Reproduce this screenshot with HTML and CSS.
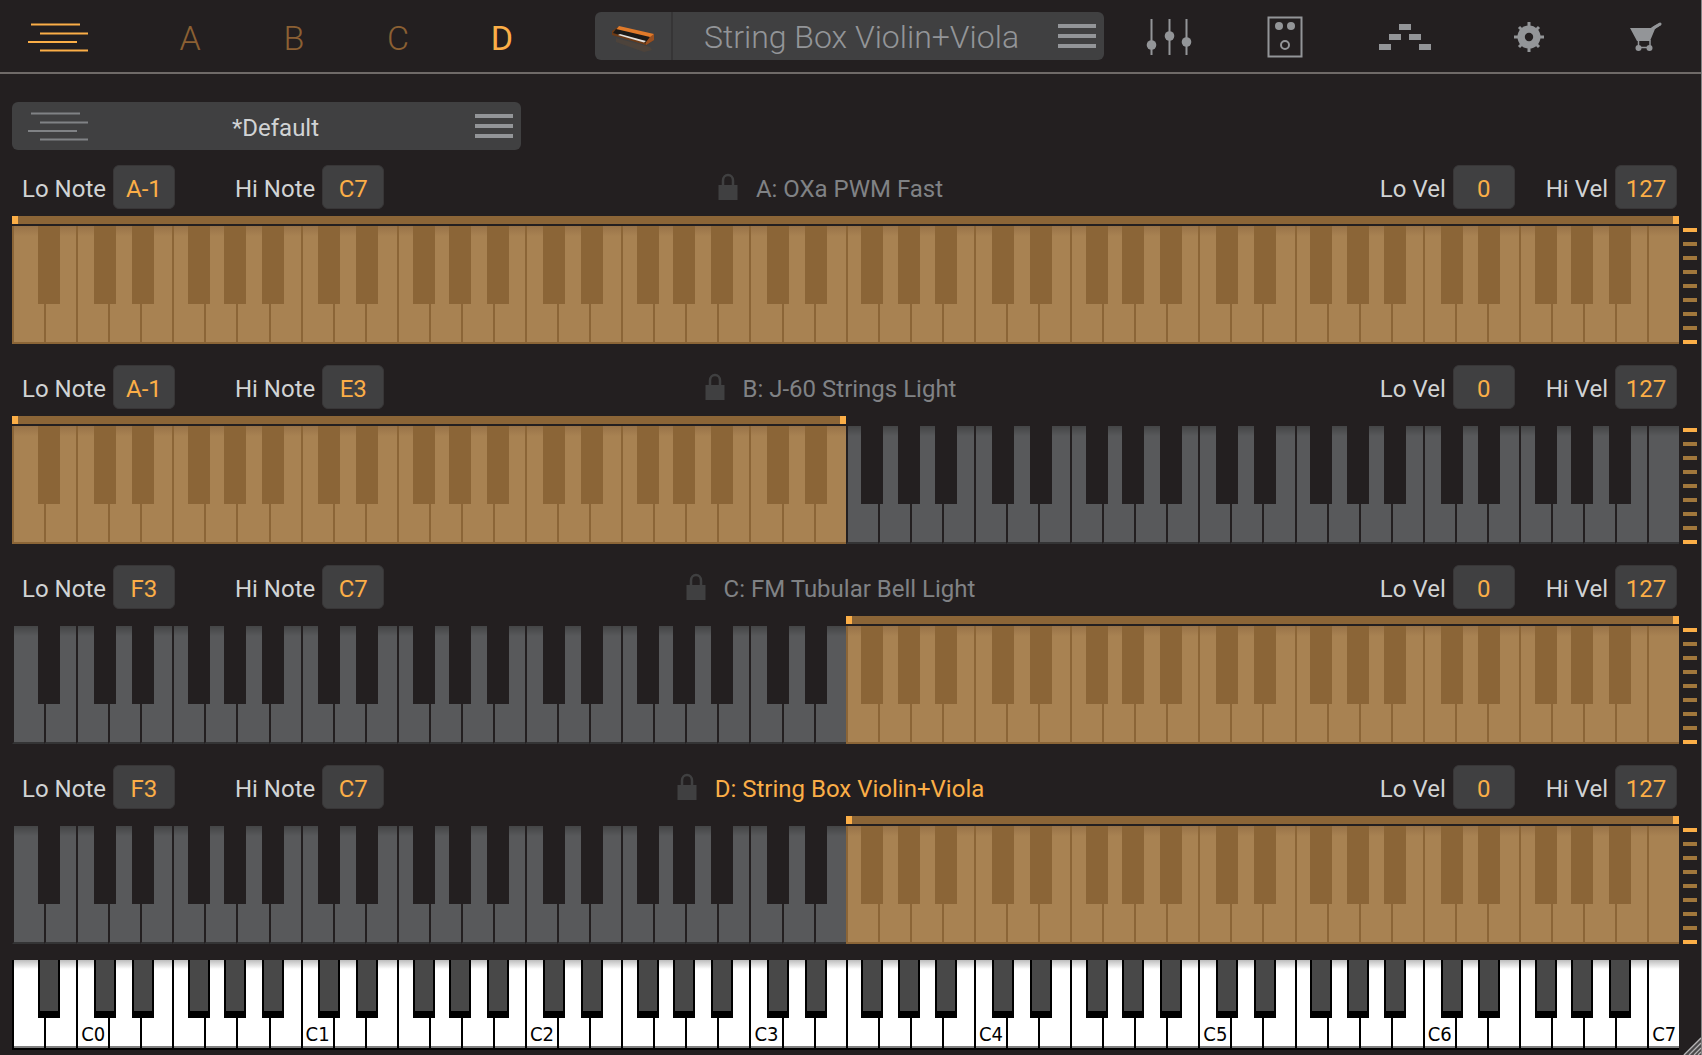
FILE: index.html
```html
<!DOCTYPE html>
<html lang="en">
<head>
<meta charset="utf-8">
<title>Keyboard Splits</title>
<link rel="stylesheet" href="styles.css">
</head>
<body>
<div class="app">
  <header class="topbar">
    <nav class="tabs" aria-label="Layers">
      <button class="tab" aria-label="Layers view"><svg width="60" height="30" viewBox="0 0 60 30"><path d="M3 2.5h49M12 11.5h48M0 20h49M12 28.500h48" stroke="currentColor" stroke-width="2" fill="none"/></svg></button>
      <button class="tab dim">A</button>
      <button class="tab dim">B</button>
      <button class="tab dim">C</button>
      <button class="tab">D</button>
    </nav>
    <div class="preset">
      <button class="thumb" aria-label="Instrument">
        <svg width="46" height="30" viewBox="0 0 46 30">
          <path d="M6 15L40 24L42 27L34 29L6 19Z" fill="#5a4636" opacity=".5"/>
          <path d="M2 8L8 4L44 12L44 17L36 22L2 12Z" fill="#6e3b16"/>
          <path d="M9 3L44 11L41 15L6 7Z" fill="#e07a2a"/>
          <path d="M6 6L40 14L37 20L3 10Z" fill="#1c1a18"/>
          <path d="M10 11L36 18L34 19.500L8 12Z" fill="#e6e2dd"/>
          <path d="M40 14L44 11L44 17L36 22L36 19Z" fill="#9a5020"/>
        </svg>
      </button>
      <button class="preset-name">String Box Violin+Viola</button>
      <button class="menu" aria-label="Preset menu"><span class="burger"></span></button>
    </div>
    <div class="tools">
      <button class="tool" aria-label="Mixer"><svg width="46" height="40" viewBox="0 0 46 40"><path d="M5.500 2v36M23.500 2v36M40.500 2v36" stroke="currentColor" stroke-width="2"/><circle cx="5.500" cy="28" r="4.800" fill="currentColor"/><circle cx="23.500" cy="19" r="4.800" fill="currentColor"/><circle cx="40.500" cy="25" r="4.800" fill="currentColor"/></svg></button>
      <button class="tool" aria-label="Effects"><svg width="36" height="42" viewBox="0 0 36 42"><rect x="1.500" y="1.500" width="33" height="39" fill="none" stroke="currentColor" stroke-width="2"/><circle cx="12" cy="10" r="4" fill="currentColor"/><circle cx="24" cy="10" r="4" fill="currentColor"/><circle cx="18" cy="29" r="4" fill="none" stroke="currentColor" stroke-width="2"/></svg></button>
      <button class="tool" aria-label="Arpeggiator"><svg width="54" height="28" viewBox="0 0 54 28"><path d="M21 1h12v6H21zM11 11h12v6H11zM31 11h12v6H31zM1 21h12v6H1zM41 21h12v6H41z" fill="currentColor"/></svg></button>
      <button class="tool" aria-label="Settings"><svg width="32" height="32" viewBox="0 0 32 32"><path d="M16 1v30M1 16h30M6 6l20 20M26 6L6 26" stroke="currentColor" stroke-width="3"/><circle cx="16" cy="16" r="11.500" fill="currentColor"/><circle cx="16" cy="16" r="4.200" fill="#231f20"/></svg></button>
      <button class="tool" aria-label="Store"><svg width="32" height="32" viewBox="0 0 32 32"><path d="M0 7H22L24 5L30 2L31 4L25 8L20 20H7Z" fill="currentColor"/><path d="M22.500 7.500L30 3" stroke="currentColor" stroke-width="3" stroke-linecap="round"/><path d="M8.500 19v8M20 19v8M8 26.500h12" stroke="currentColor" stroke-width="1.500"/><circle cx="8.500" cy="27" r="3" fill="currentColor"/><circle cx="19.500" cy="27" r="3" fill="currentColor"/></svg></button>
    </div>
  </header>

  <main class="content">
    <button class="layer-preset">
      <svg width="60" height="30" viewBox="0 0 60 30"><path d="M3 2.500h49M12 11.500h48M0 20h49M12 28.500h48" stroke="currentColor" stroke-width="2" fill="none"/></svg>
      <span class="layer-name">*Default</span>
      <span class="burger"></span>
    </button>

    <section class="part" data-from="0" data-to="52">
      <div class="part-head">
        <div class="fields notes"><label>Lo Note <input value="A-1"></label><label>Hi Note <input value="C7"></label></div>
        <h2 class="part-title"><svg class="lock" viewBox="0 0 20 28"><use href="#lock"/></svg><span>A: OXa PWM Fast</span></h2>
        <div class="fields velocity"><label>Lo Vel <input value="0"></label><label>Hi Vel <input value="127"></label></div>
      </div>
      <div class="part-body"><div class="zone"><div class="range"></div><div class="keys"></div></div><div class="meter"></div></div>
    </section>

    <section class="part" data-from="0" data-to="26">
      <div class="part-head">
        <div class="fields notes"><label>Lo Note <input value="A-1"></label><label>Hi Note <input value="E3"></label></div>
        <h2 class="part-title"><svg class="lock" viewBox="0 0 20 28"><use href="#lock"/></svg><span>B: J-60 Strings Light</span></h2>
        <div class="fields velocity"><label>Lo Vel <input value="0"></label><label>Hi Vel <input value="127"></label></div>
      </div>
      <div class="part-body"><div class="zone"><div class="range"></div><div class="keys"></div></div><div class="meter"></div></div>
    </section>

    <section class="part" data-from="26" data-to="52">
      <div class="part-head">
        <div class="fields notes"><label>Lo Note <input value="F3"></label><label>Hi Note <input value="C7"></label></div>
        <h2 class="part-title"><svg class="lock" viewBox="0 0 20 28"><use href="#lock"/></svg><span>C: FM Tubular Bell Light</span></h2>
        <div class="fields velocity"><label>Lo Vel <input value="0"></label><label>Hi Vel <input value="127"></label></div>
      </div>
      <div class="part-body"><div class="zone"><div class="range"></div><div class="keys"></div></div><div class="meter"></div></div>
    </section>

    <section class="part" data-from="26" data-to="52">
      <div class="part-head">
        <div class="fields notes"><label>Lo Note <input value="F3"></label><label>Hi Note <input value="C7"></label></div>
        <h2 class="part-title current"><svg class="lock" viewBox="0 0 20 28"><use href="#lock"/></svg><span>D: String Box Violin+Viola</span></h2>
        <div class="fields velocity"><label>Lo Vel <input value="0"></label><label>Hi Vel <input value="127"></label></div>
      </div>
      <div class="part-body"><div class="zone"><div class="range"></div><div class="keys"></div></div><div class="meter"></div></div>
    </section>

    <div class="keys piano"></div>
  </main>
  <svg class="grip" width="18" height="18" viewBox="0 0 18 18"><path d="M0 18L18 0V18Z" fill="#4a4849"/><path d="M1 18L18 1M6 18L18 6M11 18L18 11M15 18L18 15" stroke="#b5b3b4" stroke-width="1.300"/></svg>
</div>
<svg class="defs" width="0" height="0"><defs><symbol id="lock" viewBox="0 0 20 28"><path d="M5 13V7.500a5 5.500 0 0 1 10 0V13" fill="none" stroke="currentColor" stroke-width="2.500"/><path d="M0.500 12h19v15h-19z" fill="currentColor"/></symbol></defs></svg>
<script src="keys.js"></script>
</body>
</html>
```
FILE: styles.css
```css
* { box-sizing: border-box; }

body {
  margin: 0;
  background: #231f20;
  color: #d1d3d4;
  font-family: Roboto, "Liberation Sans", sans-serif;
  font-size: 24px;
  font-weight: 400;
}

button {
  margin: 0;
  padding: 0;
  border: 0;
  background: none;
  color: inherit;
  font: inherit;
  cursor: pointer;
}

svg { display: block; }
.defs { position: absolute; }

.app {
  position: relative;
  min-height: 100vh;
  overflow: hidden;
  border-right: 1px solid #858384;
}

.topbar {
  display: grid;
  grid-template-columns: 595fr 509fr 597fr;
  height: 74px;
  border-bottom: 2px solid #6f6a68;
}

.tabs {
  display: grid;
  grid-template-columns: 138fr repeat(4, 104fr) 41fr;
  color: #fbae47;
  font-size: 34px;
  font-weight: 300;
}
.tab { display: flex; align-items: center; justify-content: center; line-height: 76px; }
.tab:first-child { justify-content: flex-start; padding: 0 0 2px 28px; }
.tab:nth-child(5) { font-weight: 400; }
.dim { color: #8b6033; }

.preset {
  display: flex;
  height: 48px;
  margin-top: 12px;
  border-radius: 6px;
  background: #404041;
  color: #939598;
}
.thumb {
  display: flex;
  align-items: center;
  justify-content: center;
  width: 78px;
  padding-top: 4px;
  border-right: 2px solid #363536;
}
.preset-name { flex: 1; font-size: 32px; font-weight: 300; line-height: 50px; white-space: nowrap; }
.menu { padding: 0 8px; }

.burger {
  display: block;
  width: 38px;
  height: 24px;
  border-top: 4px solid #939598;
  border-bottom: 4px solid #939598;
  background: linear-gradient(#939598, #939598) center / 100% 4px no-repeat;
}

.tools {
  display: grid;
  grid-template-columns: 116fr 116fr 125fr 123fr 111fr;
  padding: 0 0 3px 7px;
  color: #939598;
}
.tool { display: flex; align-items: center; justify-content: center; }

.content { padding: 28px 4px 5px 12px; }

.layer-preset {
  display: grid;
  grid-template-columns: 60px 1fr 38px;
  align-items: center;
  width: 509px;
  height: 48px;
  margin-bottom: 15px;
  padding: 0 8px 0 16px;
  border-radius: 6px;
  background: #404041;
  color: #808285;
}
.layer-name { padding: 4px 12px 0 0; color: #d1d3d4; }

.part { margin-bottom: 21px; }
.part:last-of-type { margin-bottom: 16px; }

.part-head {
  display: grid;
  grid-template-columns: 1fr auto 1fr;
  align-items: center;
  height: 44px;
  margin: 0 20px 7px 10px;
  line-height: 40px;
}
.fields { display: flex; }
.notes { gap: 60px; }
.velocity { gap: 31px; justify-content: flex-end; }
.fields label { display: flex; gap: 7px; padding-top: 4px; white-space: nowrap; }
.fields input {
  width: 62px;
  height: 44px;
  margin-top: -4px;
  padding: 4px 0 0;
  border: 1px solid #383637;
  border-radius: 6px;
  background: #404041;
  color: #fbae47;
  font: inherit;
  text-align: center;
}

.part-title {
  display: flex;
  align-items: center;
  gap: 18px;
  margin: 0;
  padding-right: 38px;
  color: #808285;
  font-size: 24px;
  font-weight: 400;
  white-space: nowrap;
}
.part-title span { padding-top: 4px; }
.current { color: #fbae47; }
.lock { width: 20px; height: 28px; color: #404041; }

.part-body { display: flex; gap: 4px; }
.zone { flex: 1; }
.range {
  height: 8px;
  margin-bottom: 2px;
  border: solid #fbae47;
  border-width: 0 6px;
  background: #8b6537;
}

.keys { display: flex; height: 118px; }
.key {
  position: relative;
  flex: 1 1 0;
  border-left: 2px solid #231f20;
  border-bottom: 2px solid #343435;
  background: linear-gradient(#444546, #58595b 10px);
}
.sharp {
  position: absolute;
  z-index: 1;
  top: 0;
  width: 22px;
  height: 78px;
  background: #231f20;
}
.on { border-color: #8b6537; background: linear-gradient(#987348, #a88252 10px); }
.on .sharp { background: #8b6537; }

.sharp-c { left: 53%; }
.sharp-d { left: 72%; }
.sharp-f { left: 46%; }
.sharp-g { left: 60%; }
.sharp-a { left: 79%; }

.meter {
  display: flex;
  flex-direction: column;
  justify-content: space-between;
  width: 14px;
  padding: 12px 0 0;
}
.tick { height: 4px; background: #a1773c; }
.tick:first-child, .tick:last-child { background: #fbae47; }

.piano { height: 90px; margin-right: 18px; }
.piano .key {
  display: flex;
  align-items: flex-end;
  padding: 0 0 2px 3px;
  border-left-color: #000;
  border-bottom: 2px solid #000;
  background: linear-gradient(#bdbdbd, #fff 9px, #fff 86px, #808080 86px);
  color: #000;
  font: 20px/24px "DejaVu Sans Condensed", "Liberation Sans Narrow", "Noto Sans", sans-serif;
}
.piano .sharp {
  height: 58px;
  border: solid #000;
  border-width: 0 2px 7px;
  background: #484848;
}

.grip { position: absolute; right: 0; bottom: 0; }
```
FILE: keys.js
```js
const NAMES = "CDEFGAB";
const WHITE_KEYS = 52;

function buildKeys(box, from, to, labelled) {
  for (let i = 0; i < WHITE_KEYS; i++) {
    const name = NAMES[(i + 5) % 7];
    const key = document.createElement("div");
    key.className = i >= from && i < to ? "key on" : "key";
    if ("CDFGA".includes(name) && i < WHITE_KEYS - 1) {
      const sharp = document.createElement("div");
      sharp.className = "sharp sharp-" + name.toLowerCase();
      key.append(sharp);
    }
    if (labelled && name === "C") {
      key.append("C" + (i - 2) / 7);
    }
    box.append(key);
  }
}

for (const part of document.querySelectorAll(".part")) {
  const from = Number(part.dataset.from);
  const to = Number(part.dataset.to);
  const range = part.querySelector(".range");
  range.style.marginLeft = from / WHITE_KEYS * 100 + "%";
  range.style.width = (to - from) / WHITE_KEYS * 100 + "%";
  buildKeys(part.querySelector(".keys"), from, to, false);
  for (let i = 0; i < 9; i++) {
    const tick = document.createElement("div");
    tick.className = "tick";
    part.querySelector(".meter").append(tick);
  }
}

buildKeys(document.querySelector(".piano"), 0, 0, true);
```
